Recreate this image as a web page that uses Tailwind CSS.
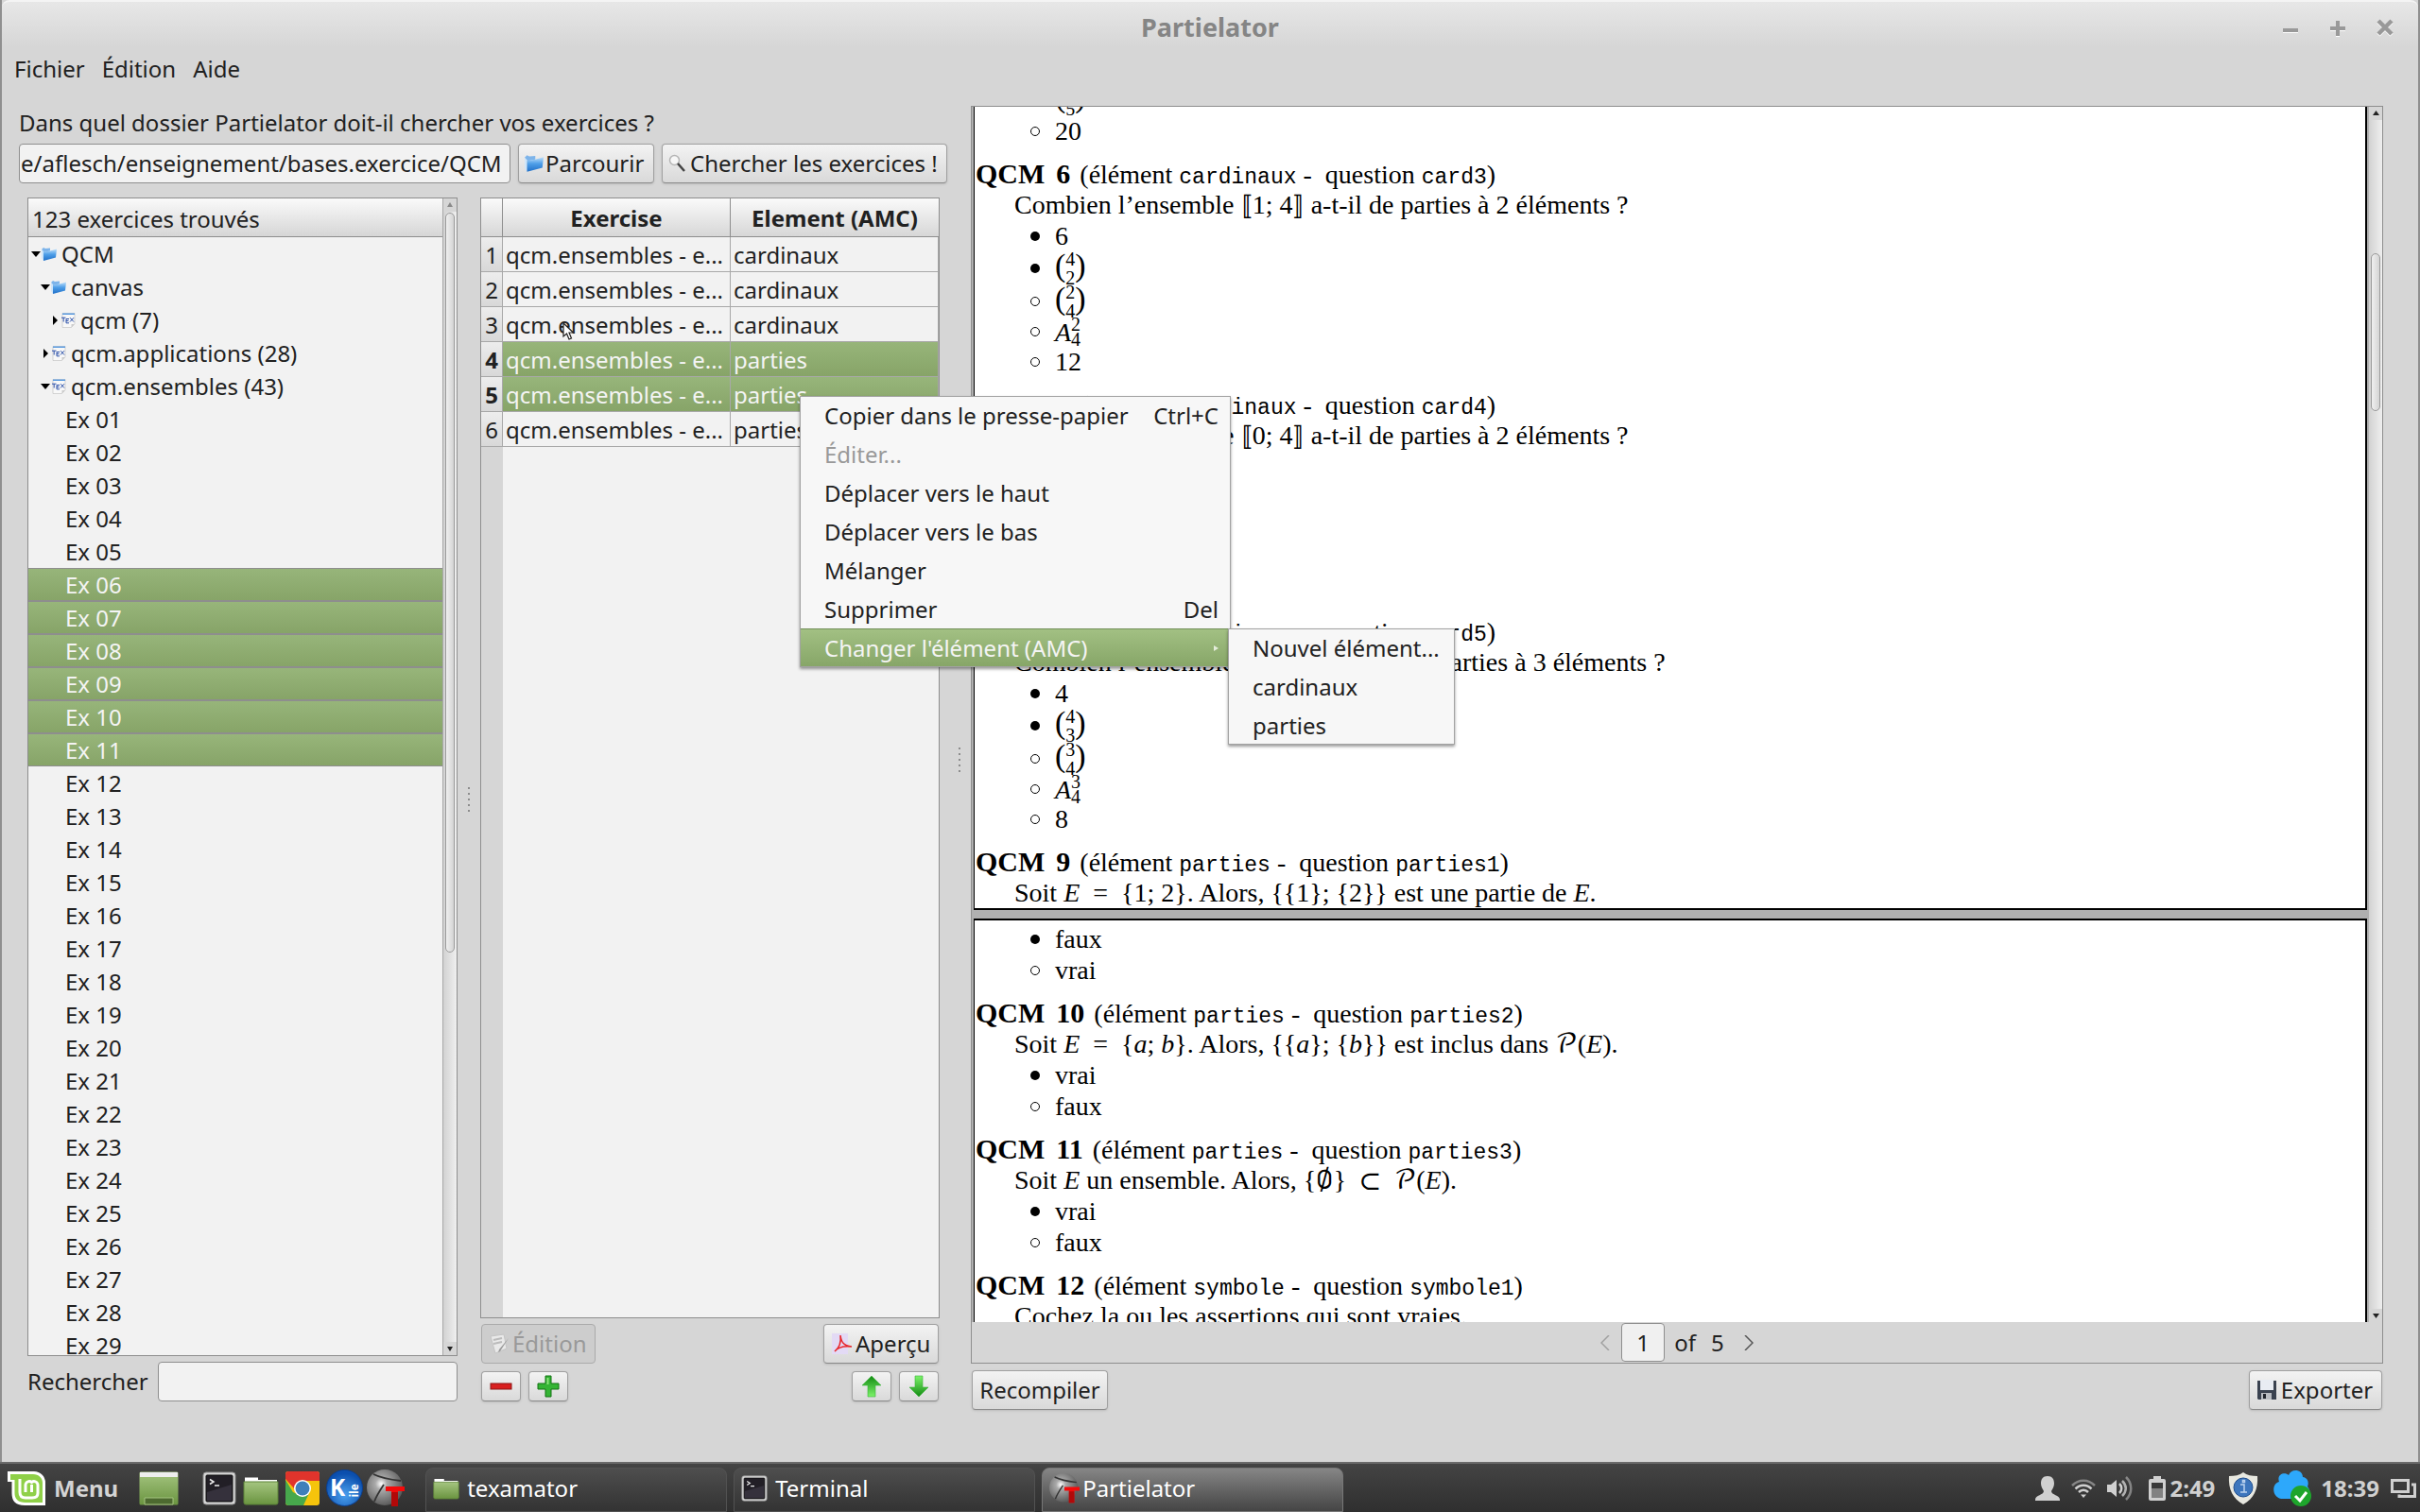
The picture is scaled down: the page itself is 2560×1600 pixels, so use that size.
<!DOCTYPE html>
<html lang="fr">
<head>
<meta charset="utf-8">
<title>Partielator</title>
<script src="https://cdn.jsdelivr.net/npm/@tailwindcss/browser@4"></script>
</head>
<body class="relative flex h-screen flex-col overflow-hidden bg-[#8f8f8f] font-['Noto_Sans',sans-serif] text-2xl leading-8 text-[#212121]">

<!-- Shared symbols -->
<svg class="absolute size-0" aria-hidden="true">
  <defs>
    <linearGradient id="blue" x1="0" y1="0" x2="0" y2="1"><stop offset="0" stop-color="#bfe0fb"/><stop offset=".45" stop-color="#4f9fe8"/><stop offset="1" stop-color="#1f6fc8"/></linearGradient>
    <linearGradient id="green" x1="0" y1="0" x2="0" y2="1"><stop offset="0" stop-color="#a5c580"/><stop offset="1" stop-color="#6a9440"/></linearGradient>
    <linearGradient id="lime" x1="0" y1="0" x2="0" y2="1"><stop offset="0" stop-color="#128a12"/><stop offset="1" stop-color="#7df36a"/></linearGradient>
    <linearGradient id="limeDown" x1="0" y1="1" x2="0" y2="0"><stop offset="0" stop-color="#128a12"/><stop offset="1" stop-color="#7df36a"/></linearGradient>
    <radialGradient id="ball" cx=".4" cy=".4" r=".65"><stop offset="0" stop-color="#fff"/><stop offset=".25" stop-color="#aaa"/><stop offset="1" stop-color="#555"/></radialGradient>
    <radialGradient id="kblue" cx=".5" cy=".7" r=".6"><stop offset="0" stop-color="#4ba0ee"/><stop offset="1" stop-color="#0b4fae"/></radialGradient>
    <symbol id="folder" viewBox="0 0 16 16"><path d="M0 3l2-2 2 1 5-.5v3L2 6z" fill="#7db4ea"/><path d="M0 3v9l2 3V5z" fill="#cfe6fa"/><path d="M2 5.500l7-1 7-2-1 9L2 15z" fill="url(#blue)"/></symbol>
    <symbol id="tex" viewBox="0 0 16 16"><path d="M2 .5h13v11L11.500 15.500H2z" fill="#f8f8f8" stroke="#c4c4c4" stroke-width=".7"/><path d="M2 .5h13v1.500H2z" fill="#5b9be0"/><path d="M11.500 15.500V12h3.500z" fill="#ccc"/><path d="M1 5.200h4.500M3.200 5.200v4.300M6 6.500h3M6 6.500v4.300h3M6 8.500h2.500M10 5.200l4 4.300M14 5.200l-4 4.300" stroke="#2a4fa8" stroke-width="1" fill="none"/></symbol>
    <symbol id="gfolder" viewBox="0 0 38 32"><path d="M2 5V2.500h14V5h20v6H2z" fill="#fff"/><path d="M1 7h36v22a2 2 0 0 1-2 2H3a2 2 0 0 1-2-2z" fill="url(#green)" stroke="#5d8438" stroke-width="1"/></symbol>
    <symbol id="term" viewBox="0 0 36 36"><rect x="1" y="1" width="34" height="34" rx="3" fill="#d8d8d8" stroke="#8c8c8c"/><rect x="4" y="4" width="28" height="28" rx="1" fill="#221f26" stroke="#111"/><path d="M5 31V22l26-8v17z" fill="#46404f" opacity=".55"/><path d="M8 8.500l4 2.500-4 2.500M13 15h5" stroke="#eee" stroke-width="1.500" fill="none"/></symbol>
    <symbol id="sphere" viewBox="0 0 40 40"><circle cx="19" cy="19" r="19" fill="url(#ball)"/><path d="M7 5c8 4 20 6 29 7M18 16C14 22 10 28 8 34" stroke="#333" stroke-width="1.800" fill="none"/><path d="M20 18h20v5h-7v16h-7V23h-6z" fill="#f30a0a"/><path d="M26 24h7v15h-7z" fill="#b10909"/></symbol>
  </defs>
</svg>

<div class="mx-[2px] flex min-h-0 flex-1 flex-col bg-[#d6d6d6]">
  <!-- Title bar -->
  <header class="relative flex h-[50px] shrink-0 items-center justify-center rounded-t-lg border-t-2 border-[#f4f4f4] bg-linear-to-b from-[#e7e7e7] to-[#d6d6d6] pt-1.5">
    <h1 class="text-[27px] font-bold text-[#858585]">Partielator</h1>
    <div class="absolute right-[26px] top-[18px] flex gap-8 text-[#999]">
      <button aria-label="Réduire"><svg class="size-[18px] drop-shadow-[0_1px_0_#fff]" viewBox="0 0 18 18"><path d="M1 12h16" stroke="currentColor" stroke-width="4"/></svg></button>
      <button aria-label="Agrandir"><svg class="size-[18px] drop-shadow-[0_1px_0_#fff]" viewBox="0 0 18 18"><path d="M1 10h16M9 2v16" stroke="currentColor" stroke-width="4"/></svg></button>
      <button aria-label="Fermer"><svg class="size-[18px] drop-shadow-[0_1px_0_#fff]" viewBox="0 0 18 18"><path d="M2 2l14 14M16 2L2 16" stroke="currentColor" stroke-width="4.500"/></svg></button>
    </div>
  </header>

  <nav class="flex h-[46px] shrink-0 items-center gap-[18px] px-[13px]">
    <button>Fichier</button><button>Édition</button><button>Aide</button>
  </nav>

  <main class="flex min-h-0 flex-1">
    <!-- Exercise browser -->
    <section class="flex w-[1000px] shrink-0 flex-col pb-16 pl-[18px] pt-4">
      <label for="path" class="mb-1 flex h-9 items-center">Dans quel dossier Partielator doit-il chercher vos exercices ?</label>
      <div class="flex h-[42px] gap-2">
        <input id="path" value="e/aflesch/enseignement/bases.exercice/QCM" class="min-w-0 flex-1 rounded-sm border border-[#8e8e8e] bg-[#f2f2f2] px-px">
        <button class="flex w-[144px] items-center rounded-sm border border-[#a0a0a0] border-b-[#8a8a8a] bg-linear-to-b from-[#f3f3f3] to-[#d9d9d9] pl-1.5 shadow-sm"><svg class="mr-[2px] size-5"><use href="#folder"/></svg>Parcourir</button>
        <button class="flex w-[302px] items-center rounded-sm border border-[#a0a0a0] border-b-[#8a8a8a] bg-linear-to-b from-[#f3f3f3] to-[#d9d9d9] pl-1.5 shadow-sm"><svg class="mr-[3px] size-5" viewBox="0 0 20 20"><circle cx="6.500" cy="6.500" r="5" fill="#f7f7f7" stroke="#b5b5b5" stroke-width="1.500"/><path d="M10 10l7 8" stroke="#444" stroke-width="2.500"/></svg>Chercher les exercices !</button>
      </div>

      <div class="mt-[15px] flex min-h-0 flex-1 pl-[9px] pr-2">
        <!-- Tree -->
        <div class="flex w-[455px] shrink-0 flex-col">
          <div class="flex min-h-0 flex-1 border border-[#8e8e8e] bg-[#f2f2f2]">
            <div class="flex min-w-0 flex-1 flex-col border-r border-[#a8a8a8]">
              <div class="flex h-[41px] shrink-0 items-center border-b border-[#8e8e8e] bg-linear-to-b from-[#fafafa] to-[#d6d6d6] pl-1 pt-1">123 exercices trouvés</div>
              <ul id="tree" class="min-h-0 flex-1 overflow-hidden">
                <li class="flex h-[35px] items-center pl-[2px]"><svg class="size-3" viewBox="0 0 12 12"><path d="M1 3h10L6 9z"/></svg><svg class="mr-[5px] size-[16px]"><use href="#folder"/></svg>QCM</li>
                <li class="flex h-[35px] items-center pl-3"><svg class="size-3" viewBox="0 0 12 12"><path d="M1 3h10L6 9z"/></svg><svg class="mr-[5px] size-[16px]"><use href="#folder"/></svg>canvas</li>
                <li class="flex h-[35px] items-center pl-[22px]"><svg class="size-3" viewBox="0 0 12 12"><path d="M4 1v10l5-5z"/></svg><svg class="mr-[5px] size-[16px]"><use href="#tex"/></svg>qcm (7)</li>
                <li class="flex h-[35px] items-center pl-3"><svg class="size-3" viewBox="0 0 12 12"><path d="M4 1v10l5-5z"/></svg><svg class="mr-[5px] size-[16px]"><use href="#tex"/></svg>qcm.applications (28)</li>
                <li class="flex h-[35px] items-center pl-3"><svg class="size-3" viewBox="0 0 12 12"><path d="M1 3h10L6 9z"/></svg><svg class="mr-[5px] size-[16px]"><use href="#tex"/></svg>qcm.ensembles (43)</li>
              </ul>
            </div>
            <div class="flex w-[14px] flex-col bg-linear-to-r from-[#d2d2d2] to-[#efefef]">
              <svg class="h-[14px] w-full shrink-0 bg-[#d6d6d6]" viewBox="0 0 14 14"><path d="M4 9h6L7 4z" fill="#8a8a8a"/></svg>
              <div class="mx-[2px] mt-px h-[64%] rounded-full border border-[#9a9a9a] bg-linear-to-r from-[#f0f0f0] to-[#d4d4d4]"></div>
              <svg class="mt-auto h-[14px] w-full shrink-0 bg-[#d6d6d6]" viewBox="0 0 14 14"><path d="M4 5h6L7 10z" fill="#222"/></svg>
            </div>
          </div>
          <div class="mt-1.5 flex h-[42px] items-center justify-between">
            <label for="search">Rechercher</label>
            <input id="search" class="h-full w-[317px] rounded-sm border border-[#8e8e8e] bg-[#f2f2f2] px-2">
          </div>
        </div>

        <!-- Splitter grip -->
        <div class="flex w-6 shrink-0 flex-col items-center justify-center gap-1">
          <i class="size-[2px] bg-[#8c8c8c]"></i><i class="size-[2px] bg-[#8c8c8c]"></i><i class="size-[2px] bg-[#8c8c8c]"></i><i class="size-[2px] bg-[#8c8c8c]"></i><i class="size-[2px] bg-[#8c8c8c]"></i>
        </div>

        <!-- Selected exercises -->
        <div class="flex min-w-0 flex-1 flex-col">
          <div class="flex min-h-0 flex-1 flex-col border border-[#8e8e8e] bg-[#f2f2f2]">
            <table class="w-full table-fixed border-separate border-spacing-0 text-left">
              <thead>
                <tr class="h-[41px] bg-linear-to-b from-[#fafafa] to-[#d6d6d6]">
                  <th class="w-[23px] border-b border-r border-[#8e8e8e] p-0"></th>
                  <th class="w-[241px] border-b border-r border-[#8e8e8e] p-0 pt-[2px] text-center">Exercise</th>
                  <th class="border-b border-[#8e8e8e] p-0 pt-[2px] text-center">Element (AMC)</th>
                </tr>
              </thead>
              <tbody id="rows"></tbody>
            </table>
            <div class="flex-1 border-l-[23px] border-[#d6d6d6]"></div>
          </div>
          <div class="mt-1.5 flex h-[42px] justify-between px-px">
            <button disabled class="flex w-[121px] items-center rounded-sm border border-[#aaa] bg-[#cdcdcd] pl-1.5 text-[#999]"><svg class="mr-[2px] size-6" viewBox="0 0 24 24"><path d="M3 4l14-2 3 15-12 5z" fill="#e9e9e9" stroke="#c4c4c4"/><path d="M6 8l9-2M6 12l9-2" stroke="#bbb" stroke-width="2"/><path d="M22 6l-9 14-2 1 1-3z" fill="#999"/></svg>Édition</button>
            <button class="flex w-[122px] items-center rounded-sm border border-[#a0a0a0] border-b-[#8a8a8a] bg-linear-to-b from-[#f3f3f3] to-[#d9d9d9] pl-2 shadow-sm"><svg class="mr-[3px] size-[22px]" viewBox="0 0 22 22"><path d="M0 0h17v22H0z" fill="#e3daf5"/><path d="M9 2c1 7 3 11 12 12-8-1-14 0-18 5 4-3 7-9 6-17z" fill="none" stroke="#e8262a" stroke-width="1.500"/></svg>Aperçu</button>
          </div>
          <div class="mt-2 flex h-8 gap-2 px-px">
            <button aria-label="Retirer" class="flex w-[42px] items-center justify-center rounded-sm border border-[#a0a0a0] border-b-[#8a8a8a] bg-linear-to-b from-[#f3f3f3] to-[#d9d9d9] shadow-sm"><svg class="size-6" viewBox="0 0 24 24"><rect x="1" y="9" width="22" height="6" fill="#d81f1f" stroke="#8e1414"/></svg></button>
            <button aria-label="Ajouter" class="flex w-[42px] items-center justify-center rounded-sm border border-[#a0a0a0] border-b-[#8a8a8a] bg-linear-to-b from-[#f3f3f3] to-[#d9d9d9] shadow-sm"><svg class="size-6" viewBox="0 0 24 24"><path d="M9 1h6v8h8v6h-8v8H9v-8H1V9h8z" fill="#35b435" stroke="#137313"/><path d="M10.500 3h2v7h-2z" fill="#8be37b"/></svg></button>
            <span class="flex-1"></span>
            <button aria-label="Monter" class="flex w-[42px] items-center justify-center rounded-sm border border-[#a0a0a0] border-b-[#8a8a8a] bg-linear-to-b from-[#f3f3f3] to-[#d9d9d9] shadow-sm"><svg class="size-6" viewBox="0 0 24 24"><path d="M12 1l10 10h-6v12H8V11H2z" fill="url(#lime)" stroke="#39b339" stroke-width=".6"/></svg></button>
            <button aria-label="Descendre" class="flex w-[42px] items-center justify-center rounded-sm border border-[#a0a0a0] border-b-[#8a8a8a] bg-linear-to-b from-[#f3f3f3] to-[#d9d9d9] shadow-sm"><svg class="size-6" viewBox="0 0 24 24"><path d="M12 23L22 13h-6V1H8v12H2z" fill="url(#limeDown)" stroke="#39b339" stroke-width=".6"/></svg></button>
          </div>
        </div>
      </div>
    </section>

    <div class="flex w-[25px] shrink-0 flex-col items-center justify-center gap-1 pb-9">
      <i class="size-[2px] bg-[#8c8c8c]"></i><i class="size-[2px] bg-[#8c8c8c]"></i><i class="size-[2px] bg-[#8c8c8c]"></i><i class="size-[2px] bg-[#8c8c8c]"></i><i class="size-[2px] bg-[#8c8c8c]"></i>
    </div>

    <!-- Document preview -->
    <section class="flex min-w-0 flex-1 flex-col pb-[55px] pr-[37px] pt-4">
      <div class="flex min-h-0 flex-1 flex-col border border-[#8e8e8e]">
        <div class="flex min-h-0 flex-1">
          <div class="flex min-w-0 flex-1 flex-col gap-[9px] overflow-hidden bg-[#b0b0b0] pl-[2px] pr-[2px] font-['Liberation_Serif','DejaVu_Math_TeX_Gyre','DejaVu_Sans',serif] text-[28px] leading-[33px] text-black">
            <article class="flex h-[850px] shrink-0 flex-col justify-end overflow-hidden border-x-2 border-b-2 border-black bg-white [border-left-width:1px]">
              <div id="page1"></div>
            </article>
            <article class="min-h-0 flex-1 overflow-hidden border-2 border-b-0 border-black bg-white pt-[3px] [border-left-width:1px]">
              <div id="page2"></div>
            </article>
          </div>
          <div class="flex w-[14px] flex-col bg-linear-to-r from-[#d2d2d2] to-[#efefef]">
            <svg class="h-[14px] w-full shrink-0 bg-[#d6d6d6]" viewBox="0 0 14 14"><path d="M4 9h7L7.500 4z" fill="#222"/></svg>
            <div class="mx-[2px] mt-[141px] h-[13%] rounded-full border border-[#9a9a9a] bg-linear-to-r from-[#f0f0f0] to-[#d4d4d4]"></div>
            <svg class="mt-auto h-[14px] w-full shrink-0 bg-[#d6d6d6]" viewBox="0 0 14 14"><path d="M4 5h7L7.500 10z" fill="#222"/></svg>
          </div>
        </div>
        <div class="flex h-[43px] shrink-0 items-center justify-center">
          <button aria-label="Page précédente" class="mr-3 text-[#a0a0a0]"><svg class="h-4 w-[10px]" viewBox="0 0 10 16" fill="none" stroke="currentColor" stroke-width="1.500"><path d="M9 0L1 8l8 8"/></svg></button>
          <input aria-label="Page" value="1" class="h-[41px] w-[46px] rounded-sm border border-[#8e8e8e] bg-[#f0f0f0] text-center">
          <span class="ml-[10px] mr-4">of</span><span class="mr-[21px]">5</span>
          <button aria-label="Page suivante" class="text-[#555]"><svg class="h-4 w-[10px]" viewBox="0 0 10 16" fill="none" stroke="currentColor" stroke-width="1.500"><path d="M1 0l8 8-8 8"/></svg></button>
        </div>
      </div>
      <div class="mt-[7px] flex h-[42px] justify-between px-px">
        <button class="flex w-[144px] items-center justify-center rounded-sm border border-[#a0a0a0] border-b-[#8a8a8a] bg-linear-to-b from-[#f3f3f3] to-[#d9d9d9] shadow-sm">Recompiler</button>
        <button class="flex w-[141px] items-center justify-center gap-1 rounded-sm border border-[#a0a0a0] border-b-[#8a8a8a] bg-linear-to-b from-[#f3f3f3] to-[#d9d9d9] pr-[2px] shadow-sm"><svg class="size-[22px]" viewBox="0 0 22 22"><path d="M1 1h20v20H2l-1-1z" fill="#3a4250"/><path d="M4 0h14v11H4z" fill="#e8ecf3"/><path d="M5 14h11v7H5z" fill="#b9bcc2"/><path d="M7 15h3v5H7z" fill="#20242c"/></svg>Exporter</button>
      </div>
    </section>
  </main>
</div>

<!-- Taskbar -->
<footer class="flex h-[53px] shrink-0 items-center border-t-2 border-[#6a6a6a] bg-linear-to-b from-[#444] to-[#2f2f2f] pl-2 text-white">
  <button class="mr-[22px] flex items-center gap-[9px] font-bold text-[#d4d4d4]"><svg class="h-9 w-10" viewBox="0 0 40 36"><path d="M0 0h28a12 12 0 0 1 12 12v24H18C8 36 4.500 31 4.500 23V11H0z" fill="#fff"/><path d="M3 3h24c6 0 10 4 10 9v21H19c-8 0-11.500-4-11.500-10V9H3z" fill="#8fd048"/><path d="M13 8v14c0 4 2.500 6 6 6h7c4 0 6-2 6-5v-8.500a4 4 0 0 0-6.500-3 4 4 0 0 0-6.500 3V22M25.500 14v8" fill="none" stroke="#fff" stroke-width="3"/></svg>Menu</button>
  <svg class="mr-[25px] h-9 w-[42px]" viewBox="0 0 42 36"><rect x=".5" y=".5" width="41" height="35" rx="1.500" fill="url(#green)"/><path d="M1 1h40v5H1z" fill="#eee"/><path d="M6 28h30v7H6z" fill="#4d6a30" stroke="#a5c580"/></svg>
  <svg class="mr-[7px] size-9"><use href="#term"/></svg>
  <svg class="mr-[7px] mt-1 h-8 w-[38px]"><use href="#gfolder"/></svg>
  <svg class="mr-[7px] size-9" viewBox="0 0 36 36"><rect width="36" height="36" rx="3" fill="#f5c40c"/><path d="M0 9l11 18 8 9H3a3 3 0 0 1-3-3z" fill="#47a84c"/><path d="M8 22l10 5 7-4-6 13H9z" fill="#47a84c"/><path d="M3 0h30a3 3 0 0 1 3 3v7H18L9 18 0 8V3a3 3 0 0 1 3-3z" fill="#e0342c"/><circle cx="18" cy="18" r="9" fill="#fff"/><circle cx="18" cy="18" r="7.500" fill="#3f7fba"/></svg>
  <svg class="mr-1 size-[39px]" viewBox="0 0 40 40"><circle cx="20" cy="20" r="19.500" fill="url(#kblue)" stroke="#0a3f90"/><text x="4" y="29" font-family="Noto Sans" font-weight="700" font-size="25" fill="#fff">K</text><text x="35" y="30" transform="rotate(-90 35 30)" font-family="Noto Sans" font-weight="700" font-size="12" fill="#fff">ile</text></svg>
  <svg class="mr-[22px] size-10"><use href="#sphere"/></svg>
  <div class="flex h-full gap-[7px] pt-1">
    <button class="flex w-[319px] items-center rounded-t-lg border border-[#525252] bg-linear-to-b from-[#4e4e4e] to-[#333] pb-1 pl-[7px]"><svg class="mr-2 h-6 w-7"><use href="#gfolder"/></svg>texamator</button>
    <button class="flex w-[319px] items-center rounded-t-lg border border-[#525252] bg-linear-to-b from-[#4e4e4e] to-[#333] pb-1 pl-[7px]"><svg class="mr-2 size-7"><use href="#term"/></svg>Terminal</button>
    <button class="flex w-[319px] items-center rounded-t-lg border border-[#777] bg-linear-to-b from-[#868686] to-[#454545] pb-1 pl-[7px]"><svg class="mr-[3px] size-8"><use href="#sphere"/></svg>Partielator</button>
  </div>
  <div class="ml-auto flex items-center pr-1 font-bold text-[#d0d0d0]">
    <svg class="mr-3 size-[26px]" viewBox="0 0 26 26" fill="currentColor"><path d="M13 0c5 0 7 3 7 8 0 3-2 6-3 8 0 4 9 4 9 9v1H0v-1c0-5 9-5 9-9-1-2-3-5-3-8 0-5 2-8 7-8z"/></svg>
    <svg class="mr-3 h-5 w-[26px]" viewBox="0 0 26 20" fill="none" stroke="currentColor" stroke-width="2.500"><path d="M1 7c7-7 17-7 24 0" opacity=".5"/><path d="M4.500 10.500c5-5 12-5 17 0M8 14c3-3 7-3 10 0"/><path d="M10 16.500h6L13 20z" fill="currentColor" stroke="none"/></svg>
    <svg class="mr-4 h-[26px] w-7" viewBox="0 0 28 26" fill="none" stroke="currentColor" stroke-width="2.500"><path d="M0 9h4l6-5v18l-6-5H0z" fill="currentColor" stroke="none"/><path d="M13 8c3 3 3 7 0 10"/><path d="M16 5c5 5 5 11 0 16" opacity=".8"/><path d="M20 1c7 7 7 17 0 24" opacity=".5"/></svg>
    <svg class="mr-1 h-[26px] w-[18px]" viewBox="0 0 18 26"><path d="M5 0h8v3h3a2 2 0 0 1 2 2v19a2 2 0 0 1-2 2H2a2 2 0 0 1-2-2V5a2 2 0 0 1 2-2h3z" fill="currentColor"/><path d="M3 7h12v6H3z" fill="#3a3a3a"/><path d="M3 13h12v10H3z" fill="#828282"/></svg>
    <span class="mr-[14px]">2:49</span>
    <svg class="mr-4 h-[34px] w-8" viewBox="0 0 32 34"><path d="M16 0c4 3 9 4 15 4 1 14-4 24-15 30C5 28 0 18 1 4c6 0 11-1 15-4z" fill="#e8e8e0"/><circle cx="16" cy="16" r="10" fill="#3d76bd" stroke="#1e4d8d"/><path d="M13 13h4v8m-4 0h7M15.500 8.500h2v2h-2z" stroke="#bcd3ef" stroke-width="1.500" fill="none"/></svg>
    <svg class="mr-[10px] size-10" viewBox="0 0 40 40"><path d="M8 31C-2 29-2 15 6 13 3 5 12 2 16 6c3-8 15-6 15 2 7 1 6 8 5 10 6 8 0 14-8 13z" fill="#2da8fb"/><circle cx="29" cy="28" r="11" fill="#1ea52c"/><path d="M23 28l5 5 7-9" fill="none" stroke="#fff" stroke-width="3"/></svg>
    <span class="mr-3">18:39</span>
    <svg class="h-5 w-[27px]" viewBox="0 0 27 20" fill="none" stroke="currentColor" stroke-width="3"><path d="M1.500 1.500h17v12h-17zM22 6h3.500v12.500H9v-2"/></svg>
  </div>
</footer>

<!-- Context menu -->
<div role="menu" class="absolute left-[846px] top-[419px] w-[456px] bg-[#f7f7f7] shadow-[0_2px_3px_rgba(0,0,0,0.4)] outline outline-[#a2a2a2] -outline-offset-1">
  <button role="menuitem" class="flex h-[41px] w-full items-center justify-between pl-[26px] pr-[13px]"><span>Copier dans le presse-papier</span><span>Ctrl+C</span></button>
  <button role="menuitem" disabled class="flex h-[41px] w-full items-center pl-[26px] text-[#999]">Éditer...</button>
  <button role="menuitem" class="flex h-[41px] w-full items-center pl-[26px]">Déplacer vers le haut</button>
  <button role="menuitem" class="flex h-[41px] w-full items-center pl-[26px]">Déplacer vers le bas</button>
  <button role="menuitem" class="flex h-[41px] w-full items-center pl-[26px]">Mélanger</button>
  <button role="menuitem" class="flex h-[41px] w-full items-center justify-between pl-[26px] pr-[13px]"><span>Supprimer</span><span>Del</span></button>
  <button role="menuitem" class="flex h-[41px] w-full items-center justify-between border border-[#74905a] bg-linear-to-b from-[#a2c083] to-[#87a668] pl-[25px] pr-[11px] text-[#f4f4f4]"><span>Changer l'élément (AMC)</span><svg class="size-[6px]" viewBox="0 0 6 6"><path d="M0 0v6l5-3z" fill="#e4ecda"/></svg></button>
</div>
<div role="menu" class="absolute left-[1299px] top-[665px] w-[240px] bg-[#f7f7f7] shadow-[0_2px_3px_rgba(0,0,0,0.4)] outline outline-[#a2a2a2] -outline-offset-1">
  <button role="menuitem" class="flex h-[41px] w-full items-center pl-[26px]">Nouvel élément...</button>
  <button role="menuitem" class="flex h-[41px] w-full items-center pl-[26px]">cardinaux</button>
  <button role="menuitem" class="flex h-[41px] w-full items-center pl-[26px]">parties</button>
</div>

<!-- Pointer -->
<svg class="absolute left-[594px] top-[340px] h-[21px] w-[14px]" viewBox="0 0 14 21"><path d="M2 2v14l3.500-3 2.500 6 2.500-1-2.500-6h4.500z" fill="#fff" stroke="#222" stroke-width="1.200"/></svg>

<script>
  // Tree leaves
  const tree = document.getElementById('tree');
  for (let i = 1; i <= 29; i++) {
    const on = i >= 6 && i <= 11;
    const cls = on
      ? 'flex h-[35px] items-center border-y border-[#8e8e8e] bg-linear-to-b from-[#97b57a] to-[#87a468] pl-[39px] text-[#f4f4f4]'
      : 'flex h-[35px] items-center pl-[39px]';
    tree.insertAdjacentHTML('beforeend', `<li class="${cls}">Ex ${String(i).padStart(2, '0')}</li>`);
  }

  // Selected exercises
  const elements = ['cardinaux', 'cardinaux', 'cardinaux', 'parties', 'parties', 'parties'];
  document.getElementById('rows').innerHTML = elements.map((name, i) => {
    const on = i === 3 || i === 4;
    const cell = on
      ? 'border-b border-r border-[#a8a8a8] bg-linear-to-b from-[#97b57a] to-[#87a468] p-0 pl-[3px] pt-[2px] text-[#f4f4f4]'
      : 'border-b border-r border-[#a8a8a8] p-0 pl-[3px] pt-[2px]';
    const num = on ? 'font-bold' : 'font-normal';
    return `<tr class="h-[37px]"><th scope="row" class="border-b border-r border-[#a8a8a8] bg-linear-to-b from-[#ededed] to-[#d8d8d8] p-0 pt-[2px] text-center ${num}">${i + 1}</th><td class="${cell}">qcm.ensembles - e...</td><td class="${cell}">${name}</td></tr>`;
  }).join('');

  // Preview pages
  const title = (n, el, q) => `<h2 class="mt-3 flex h-[33px] items-baseline pl-px"><b class="mr-[10px] flex gap-3 text-3xl leading-[33px]"><span>QCM</span><span>${n}</span></b><span>(élément <span class="font-['Liberation_Mono',monospace] text-[23px]">${el}</span> - &nbsp;question <span class="font-['Liberation_Mono',monospace] text-[23px]">${q}</span>)</span></h2>`;
  const text = (t) => `<p class="h-[33px] whitespace-nowrap pl-[42px]">${t}</p>`;
  const dot = (on) => on
    ? '<i class="ml-[59px] mr-4 size-[10px] shrink-0 rounded-full bg-black"></i>'
    : '<i class="ml-[59px] mr-4 size-[10px] shrink-0 rounded-full border border-black"></i>';
  const item = (on, t) => `<div class="flex h-[33px] items-center">${dot(on)}${t}</div>`;
  const binom = (on, a, b) => `<div class="flex h-[35px] items-center">${dot(on)}<span class="pb-1.5 text-[34px]">(</span><span class="flex flex-col text-xl leading-[20px]"><span>${a}</span><span>${b}</span></span><span class="pb-1.5 text-[34px]">)</span></div>`;
  const arr = (a, b) => `<div class="flex h-[30px] items-center">${dot(false)}<i>A</i><span class="flex flex-col text-xl leading-[16px]"><span>${a}</span><span>${b}</span></span></div>`;

  document.getElementById('page1').innerHTML =
    binom(false, 2, 5) + item(false, '20') +
    title(6, 'cardinaux', 'card3') + text("Combien l’ensemble ⟦1; 4⟧ a-t-il de parties à 2 éléments ?") +
    item(true, '6') + binom(true, 4, 2) + binom(false, 2, 4) + arr(2, 4) + item(false, '12') +
    title(7, 'cardinaux', 'card4') + text("Combien l’ensemble ⟦0; 4⟧ a-t-il de parties à 2 éléments ?") +
    '<div class="h-[162px]"></div>' +
    title(8, 'cardinaux', 'card5') + text("Combien l’ensemble {1;2;3;4} a-t-il de parties à 3 éléments ?") +
    item(true, '4') + binom(true, 4, 3) + binom(false, 3, 4) + arr(3, 4) + item(false, '8') +
    title(9, 'parties', 'parties1') + text('Soit <i>E</i>&ensp;=&ensp;{1; 2}. Alors, {{1}; {2}} est une partie de <i>E</i>.');

  document.getElementById('page2').innerHTML =
    item(true, 'faux') + item(false, 'vrai') +
    title(10, 'parties', 'parties2') + text('Soit <i>E</i>&ensp;=&ensp;{<i>a</i>; <i>b</i>}. Alors, {{<i>a</i>}; {<i>b</i>}} est inclus dans 𝒫(<i>E</i>).') +
    item(true, 'vrai') + item(false, 'faux') +
    title(11, 'parties', 'parties3') + text('Soit <i>E</i> un ensemble. Alors, {∅}&ensp;⊂&ensp;𝒫(<i>E</i>).') +
    item(true, 'vrai') + item(false, 'faux') +
    title(12, 'symbole', 'symbole1') + text('Cochez la ou les assertions qui sont vraies.');
</script>
</body>
</html>
